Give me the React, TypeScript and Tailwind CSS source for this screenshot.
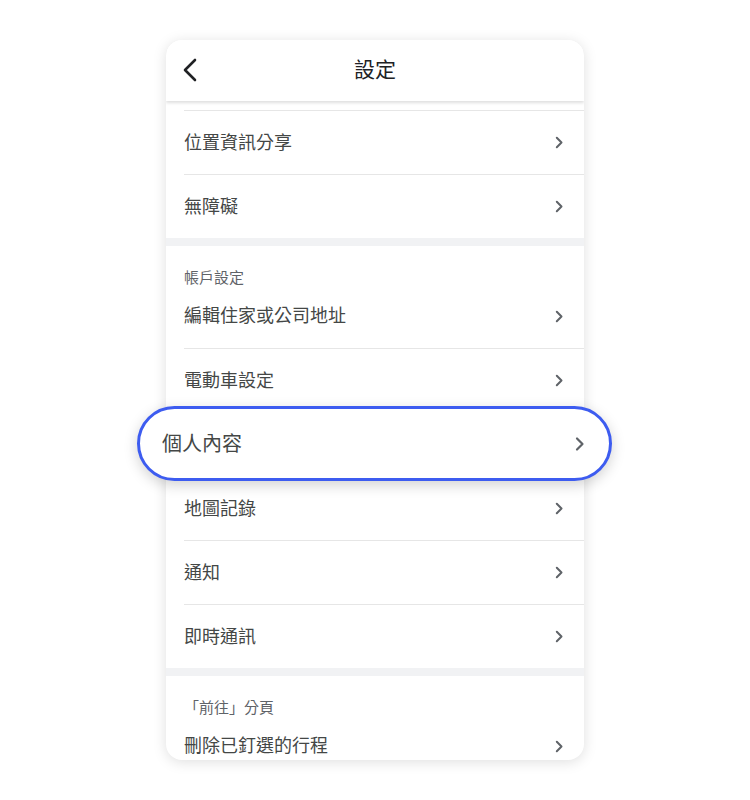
import React from "react";

const Chevron = ({ big = false }: { big?: boolean }) =>
  big ? (
    <svg width="10" height="16" viewBox="0 0 10 16" fill="none">
      <polyline points="2,2.5 7.5,8 2,13.5" stroke="#5f6368" strokeWidth="2.2" strokeLinecap="round" strokeLinejoin="round" />
    </svg>
  ) : (
    <svg width="9" height="13" viewBox="0 0 9 13" fill="none">
      <polyline points="1.8,1.8 6.5,6.5 1.8,11.2" stroke="#5f6368" strokeWidth="2" strokeLinecap="round" strokeLinejoin="round" />
    </svg>
  );

const font = { fontFamily: '"Noto Sans CJK TC", "Noto Sans", sans-serif' };

const Row = ({ label, top = true }: { label: string; top?: boolean }) => (
  <div className="pl-[18px]">
    <div
      className={`h-16 flex items-center justify-between pr-[20px] ${top ? "border-t border-[#e6e6e6]" : ""}`}
    >
      <span className="text-[18px] leading-none text-[#444746] pb-[4px]">{label}</span>
      {label ? <Chevron /> : null}
    </div>
  </div>
);

const SubHeader = ({ label }: { label: string }) => (
  <div className="h-[38px] pl-[18px] flex items-end">
    <span className="text-[15px] leading-[18px] text-[#5f6368] -mb-[2px]">{label}</span>
  </div>
);

const Band = () => <div className="h-2 bg-[#f1f2f4]" />;

export default function App() {
  return (
    <div className="min-h-screen bg-white pt-10" style={font}>
      <div className="relative w-[418px] mx-auto">
        <div className="h-[720px] overflow-hidden rounded-2xl bg-white shadow-[0_2px_14px_rgba(0,0,0,0.13)]">
          <div className="relative z-10 h-[61px] bg-white shadow-[0_2px_3px_rgba(0,0,0,0.13)] flex items-center justify-center">
            <svg className="absolute left-[16px] top-[17px]" width="18" height="26" viewBox="0 0 18 26" fill="none">
              <polyline points="13,3 3,13 13,23" stroke="#202124" strokeWidth="2.6" strokeLinecap="round" strokeLinejoin="round" />
            </svg>
            <span className="text-[21px] text-[#202124] leading-none pb-[5px]">設定</span>
          </div>
          <div className="h-[9px]" />
          <Row label="位置資訊分享" />
          <Row label="無障礙" />
          <Band />
          <SubHeader label="帳戶設定" />
          <Row label="編輯住家或公司地址" top={false} />
          <Row label="電動車設定" />
          <Row label="" />
          <Row label="地圖記錄" />
          <Row label="通知" />
          <Row label="即時通訊" />
          <Band />
          <SubHeader label="「前往」分頁" />
          <Row label="刪除已釘選的行程" top={false} />
        </div>
        <div className="absolute left-[-29px] top-[366px] w-[475px] h-[75px] rounded-full border-[3px] border-[#3d5cf0] bg-white shadow-[0_4px_14px_rgba(0,0,0,0.18)] flex items-center justify-between pl-[22px] pr-[24px]">
          <span className="text-[20px] leading-none text-[#444746] pb-[2px]">個人內容</span>
          <Chevron big />
        </div>
      </div>
    </div>
  );
}
